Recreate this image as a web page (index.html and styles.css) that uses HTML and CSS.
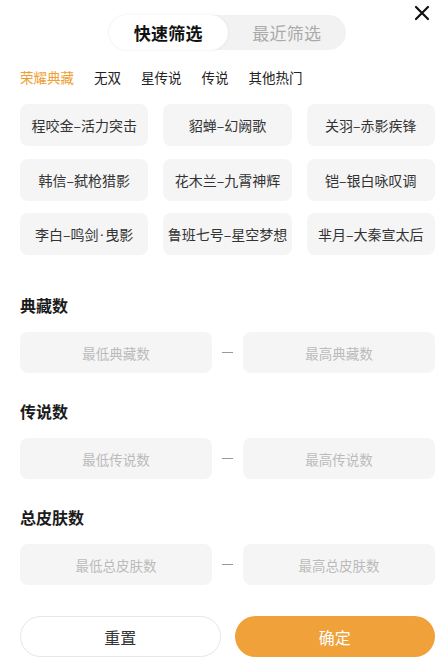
FILE: index.html
```html
<!DOCTYPE html>
<html lang="zh-CN">
<head>
<meta charset="utf-8">
<link rel="stylesheet" href="styles.css">
</head>
<body>
<div class="page">
  <header class="header">
    <div class="segment">
      <div class="seg-item active">快速筛选</div>
      <div class="seg-item">最近筛选</div>
    </div>
    <button class="close" aria-label="关闭">
      <svg width="16" height="16" viewBox="0 0 16 16"><path d="M2 2L14 14M14 2L2 14" stroke="#111" stroke-width="2.2" stroke-linecap="round" fill="none"/></svg>
    </button>
  </header>

  <nav class="tabs">
    <span class="tab active">荣耀典藏</span>
    <span class="tab">无双</span>
    <span class="tab">星传说</span>
    <span class="tab">传说</span>
    <span class="tab">其他热门</span>
  </nav>

  <div class="grid">
    <div class="card">程咬金–活力突击</div>
    <div class="card">貂蝉–幻阙歌</div>
    <div class="card">关羽–赤影疾锋</div>
    <div class="card">韩信–弑枪猎影</div>
    <div class="card">花木兰–九霄神辉</div>
    <div class="card">铠–银白咏叹调</div>
    <div class="card">李白–鸣剑<span class="dot">·</span>曳影</div>
    <div class="card">鲁班七号–星空梦想</div>
    <div class="card">芈月–大秦宣太后</div>
  </div>

  <section class="range first">
    <h3 class="range-title">典藏数</h3>
    <div class="range-row">
      <div class="range-input">最低典藏数</div>
      <span class="dash"></span>
      <div class="range-input">最高典藏数</div>
    </div>
  </section>

  <section class="range">
    <h3 class="range-title">传说数</h3>
    <div class="range-row">
      <div class="range-input">最低传说数</div>
      <span class="dash"></span>
      <div class="range-input">最高传说数</div>
    </div>
  </section>

  <section class="range">
    <h3 class="range-title">总皮肤数</h3>
    <div class="range-row">
      <div class="range-input">最低总皮肤数</div>
      <span class="dash"></span>
      <div class="range-input">最高总皮肤数</div>
    </div>
  </section>

  <footer class="actions">
    <button class="btn reset">重置</button>
    <button class="btn confirm">确定</button>
  </footer>
</div>
</body>
</html>
```

FILE: styles.css
```css
* { box-sizing: border-box; }
html, body { margin: 0; padding: 0; background: #fff; }
body {
  font-family: "Noto Sans CJK SC", "Noto Sans", sans-serif;
  color: #222;
  width: 446px;
  height: 661px;
  overflow: hidden;
}
.page {
  padding: 0 11px 0 20px;
}
.header {
  position: relative;
  display: flex;
  justify-content: center;
  padding-top: 15px;
}
.segment {
  display: flex;
  width: 237px;
  height: 35px;
  background: #f2f2f2;
  border-radius: 18px;
}
.seg-item {
  flex: 1;
  display: flex;
  align-items: center;
  justify-content: center;
  font-size: 17px;
  color: #aaa;
  border-radius: 18px;
  letter-spacing: 0.3px;
}
.seg-item.active {
  background: #fff;
  color: #111;
  font-weight: 700;
  box-shadow: 0 0 3px rgba(0,0,0,0.08);
}
.close {
  position: absolute;
  right: 5px;
  top: 5px;
  width: 16px;
  height: 16px;
  padding: 0;
  border: 0;
  background: none;
  display: flex;
}
.tabs {
  display: flex;
  gap: 20px;
  margin-top: 17px;
  line-height: 20px;
  font-size: 13.5px;
  color: #222;
}
.tab.active { color: #f0a033; }
.grid {
  display: grid;
  grid-template-columns: repeat(3, 1fr);
  column-gap: 15px;
  row-gap: 12.5px;
  margin-top: 17px;
}
.card {
  height: 42px;
  background: #f5f5f5;
  border-radius: 8px;
  display: flex;
  align-items: center;
  justify-content: center;
  font-size: 14px;
  color: #333;
  white-space: nowrap;
}
.dot {
  font-family: "Liberation Sans", sans-serif;
  padding: 0 1px;
}
.range { margin-top: 27px; }
.range.first { margin-top: 39px; }
.range-title {
  margin: 0;
  font-size: 16px;
  line-height: 22px;
  font-weight: 700;
  color: #1a1a1a;
}
.range-row {
  display: grid;
  grid-template-columns: 1fr 31px 1fr;
  align-items: center;
  margin-top: 16px;
}
.range-input {
  height: 41px;
  background: #f5f5f5;
  border-radius: 8px;
  display: flex;
  align-items: center;
  justify-content: center;
  font-size: 13.5px;
  color: #bbb;
}
.dash {
  justify-self: center;
  width: 11px;
  height: 1px;
  background: #999;
}
.actions {
  display: grid;
  grid-template-columns: 1fr 1fr;
  column-gap: 14px;
  margin-top: 31px;
}
.btn {
  height: 41px;
  border-radius: 21px;
  font-family: inherit;
  font-size: 16px;
  padding: 0;
}
.reset {
  background: #fff;
  border: 1px solid #e6e6e6;
  color: #333;
}
.confirm {
  background: #f0a13a;
  border: 0;
  color: #fff;
}
```
